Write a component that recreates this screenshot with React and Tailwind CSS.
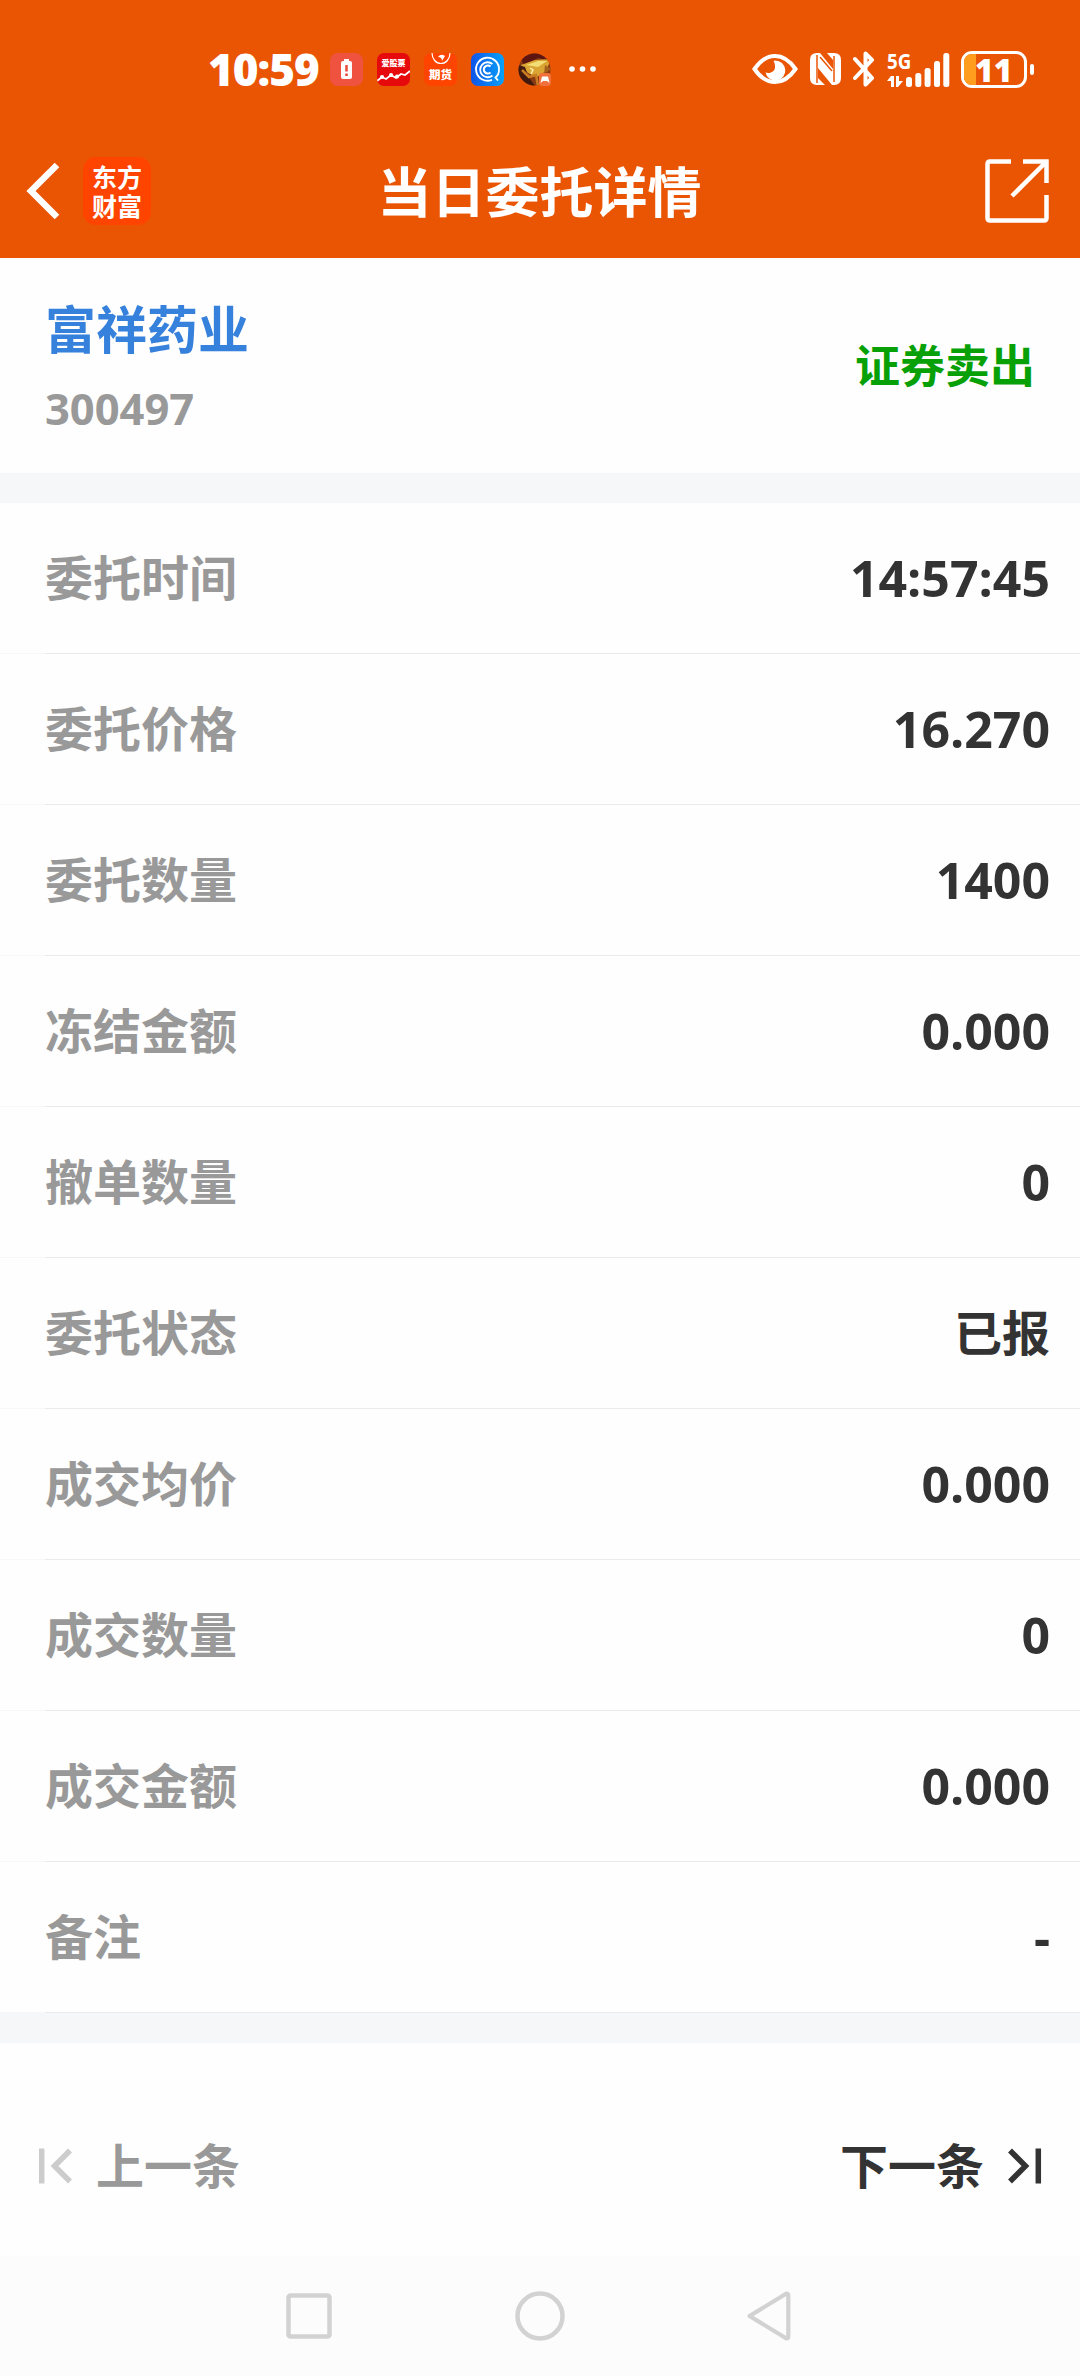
import React from 'react'

const rows = [
  { label: '委托时间', value: '14:57:45' },
  { label: '委托价格', value: '16.270' },
  { label: '委托数量', value: '1400' },
  { label: '冻结金额', value: '0.000' },
  { label: '撤单数量', value: '0' },
  { label: '委托状态', value: '已报', isText: true },
  { label: '成交均价', value: '0.000' },
  { label: '成交数量', value: '0' },
  { label: '成交金额', value: '0.000' },
  { label: '备注', value: '-' }
]

const NotificationIcons = () => (
  <div className="ml-[10px] flex items-center gap-[14px]">
    <svg width="33" height="33" viewBox="0 0 33 33">
      <rect width="33" height="33" rx="8" fill="#ef5340" />
      <rect x="14" y="6" width="5" height="3" fill="#fff" />
      <rect x="11" y="8" width="11" height="18" rx="2" fill="#fff" />
      <path d="M16.500 12v6.500M16.500 20.500v2.500" stroke="#e8493a" strokeWidth="2.500" />
    </svg>
    <div className="flex h-[33px] w-[33px] flex-col items-center overflow-hidden rounded-[7px] bg-[#e60a0c] pt-[6px] text-white">
      <span className="text-[8px] leading-[8px] font-black whitespace-nowrap">爱股票</span>
      <svg className="mt-[2px]" width="33" height="14" viewBox="0 0 33 14">
        <path d="M0 12l5-4 4 2 5-4 5 3 5-4 4 1 5-4" fill="none" stroke="#fff" strokeWidth="1.800" />
        <path d="M5 8h.1M14 6h.1M20 7.500h.1" stroke="#fff" strokeWidth="4" strokeLinecap="round" />
      </svg>
    </div>
    <div className="flex h-[33px] w-[33px] flex-col items-center overflow-hidden rounded-[7px] bg-[#ff4400] text-white">
      <svg width="20" height="13" viewBox="0 0 20 13">
        <path d="M1 0c0 6 4 10.500 9 10.500S19 6 19 0" fill="none" stroke="#fff" strokeWidth="1.200" />
        <path d="M7 4q3-4 7-1l-3 5q0-4-4-4" fill="#fff" />
      </svg>
      <span className="text-[11.500px] leading-[17px] font-black whitespace-nowrap">期货</span>
    </div>
    <svg width="33" height="33" viewBox="0 0 33 33">
      <defs>
        <linearGradient id="blueTile">
          <stop offset="0" stopColor="#1054e8" />
          <stop offset="1" stopColor="#08a2fa" />
        </linearGradient>
      </defs>
      <rect width="33" height="33" rx="7" fill="url(#blueTile)" />
      <g fill="none" stroke="#fff" strokeWidth="1.800">
        <path d="M21 26.800A11.500 11.500 0 1 1 28 17q0 4.500-3.500 7.500l2.500 3" />
        <path d="M21.500 11a7.500 7.500 0 1 0 0 11.500" />
        <path d="M19.500 13.500a4 4 0 1 0 0 6" strokeWidth="2.200" />
      </g>
    </svg>
    <svg width="33" height="33" viewBox="0 0 33 33">
      <defs>
        <clipPath id="avatar"><circle cx="16.500" cy="16.500" r="16" /></clipPath>
      </defs>
      <g clipPath="url(#avatar)">
        <rect width="33" height="33" fill="#8a3a10" />
        <path d="M0 0h33v8L20 5 6 12z" fill="#5e1512" />
        <path d="M3 12l14-5 16-1-5 12-9 6-9-4z" fill="#dba534" />
        <path d="M8 12l12-4 9 0-9 6z" fill="#f3dd75" />
        <path d="M0 12l7 2 3 9 7 10H0z" fill="#42190f" />
        <path d="M4 17l7 7 7-2 2 11" fill="none" stroke="#c97c22" strokeWidth="2.500" />
        <path d="M12 15l3 2-2 4" fill="none" stroke="#fff3b0" strokeWidth="1.500" />
        <path d="M27 12l6 4-7 5z" fill="#a5621b" />
      </g>
      <rect x="21" y="20" width="12" height="13" rx="3" fill="#f2713a" />
      <path d="M22.500 30l1.500-6.500h6l1.500 6.500-2.500-2h-4z" fill="#fff" />
    </svg>
    <svg className="ml-[4px]" width="27" height="6" viewBox="0 0 27 6" fill="#fff">
      <circle cx="3" cy="3" r="2.800" />
      <circle cx="13.500" cy="3" r="2.800" />
      <circle cx="24" cy="3" r="2.800" />
    </svg>
  </div>
)

const SystemIcons = () => (
  <div className="flex items-center text-white">
    <svg width="46" height="32" viewBox="0 0 46 32">
      <path d="M2.500 16C8 8 15 3 23 3s15 5 20.500 13C38 24 31 29 23 29S8 24 2.500 16z" fill="none" stroke="#fff" strokeWidth="4" />
      <path d="M23 7.500a10 10 0 1 1-9.500 12c4 1.500 10-.5 9.500-6 0-2-.5-4-1.500-5.500z" fill="#fff" />
    </svg>
    <svg className="ml-3" width="31" height="32" viewBox="0 0 31 32">
      <path d="M7 0h3l13 16V7L17 0h7q7 0 7 7v18q0 7-7 7h-2L8 15v10l7 7H7q-7 0-7-7V7Q0 0 7 0z" fill="#fff" />
      <path d="M7 2v28M24 3v26M10 4l12 14" stroke="#ea5504" strokeWidth="1.500" fill="none" />
    </svg>
    <svg className="ml-3" width="22" height="36" viewBox="0 0 22 36">
      <path d="M2 8l17 19-6.500 6.500V2.500L19 9 2 27" fill="none" stroke="#fff" strokeWidth="4" strokeLinejoin="round" strokeLinecap="round" />
    </svg>
    <div className="ml-3 flex h-[35px] items-end">
      <div className="flex h-[35px] w-[19px] flex-col justify-between">
        <span className="origin-left scale-x-[0.850] text-[22px] leading-[17px] font-bold">5G</span>
        <svg width="16" height="11" viewBox="0 0 16 11">
          <path d="M0 5l4-5h3v11H4V5zM9 0h3v5h4l-5 6H9z" fill="#fff" />
        </svg>
      </div>
      <svg width="44" height="34" viewBox="0 0 44 34" fill="#fff">
        <rect x="0" y="24" width="6" height="10" rx="2.500" />
        <rect x="9.300" y="20" width="6" height="14" rx="2.500" />
        <rect x="18.600" y="15" width="6" height="19" rx="2.500" />
        <rect x="28" y="8" width="6" height="26" rx="2.500" />
        <rect x="37.300" y="0" width="6" height="34" rx="2.500" />
      </svg>
    </div>
    <div className="ml-[11px] flex h-[37px] w-[66px] rounded-[11px] border-[3px] border-white">
      <div className="h-full w-[12px] rounded-l-[8px] bg-[#ff9d1e]" />
      <span className="-ml-[1px] text-[32px] leading-[31px] font-extrabold">11</span>
    </div>
    <div className="ml-[3px] h-[11px] w-[4px] rounded-full bg-white" />
  </div>
)

const Header = () => (
  <header className="h-[258px] bg-[#ea5504] text-white">
    <div className="flex h-[138px] items-center justify-between pr-[46px] pl-[208px]">
      <div className="flex items-center">
        <span className="w-[112px] text-[44px] leading-none font-extrabold tracking-[-1px]">10:59</span>
        <NotificationIcons />
      </div>
      <SystemIcons />
    </div>
    <div className="flex h-[106px] items-center justify-between pr-[31px] pl-[26px]">
      <div className="flex w-[300px] items-center">
        <svg width="34" height="58" viewBox="0 0 34 58">
          <path d="M31 3L5 29l26 26" fill="none" stroke="#fff" strokeWidth="6.500" />
        </svg>
        <div className="ml-[23px] flex h-[68px] w-[68px] items-center justify-center rounded-[13px] bg-[#ff4400]">
          <span className="w-[50px] font-['Noto_Sans_CJK_SC',sans-serif] text-[25px] leading-[29px] font-bold">东方财富</span>
        </div>
      </div>
      <h1 className="pt-[2px] pl-[4px] text-[54px] leading-[60px] font-bold">当日委托详情</h1>
      <div className="flex w-[300px] justify-end">
        <svg width="64" height="64" viewBox="0 0 64 64" fill="none" stroke="#fff" strokeWidth="4.500">
          <path d="M26 2.500H5q-2.500 0-2.500 2.500v54q0 2.500 2.500 2.500h54q2.500 0 2.500-2.500V36" />
          <path d="M38 2.500h23.500V24M61 3L27 37" />
        </svg>
      </div>
    </div>
  </header>
)

const DetailRow = ({ label, value, isText }) => (
  <div>
    <div className="flex h-[150px] items-center justify-between pr-[30px] pl-[45px]">
      <span className="text-[48px] leading-none font-bold text-[#999999]">{label}</span>
      {isText ? (
        <span className="text-[48px] leading-none font-bold text-[#333333]">{value}</span>
      ) : (
        <span className="text-[50px] leading-none font-bold text-[#333333]">{value}</span>
      )}
    </div>
    <div className="flex h-px">
      <div className="w-[45px] bg-[#f7f7f7]" />
      <div className="flex-1 bg-[#ebebeb]" />
    </div>
  </div>
)

const App = () => {
  return (
    <div className="flex h-[2376px] w-[1080px] flex-col overflow-hidden bg-[#fefefe] font-['Open_Sans','Noto_Sans_CJK_SC',sans-serif] font-medium">
      <Header />

      {/* Stock */}
      <section className="flex h-[215px] items-center justify-between pr-[45px] pl-[45px]">
        <div className="pt-[6px]">
          <h2 className="text-[51px] leading-[60px] font-bold text-[#3681dc]">富祥药业</h2>
          <p className="mt-5 text-[43.500px] leading-[60px] font-bold text-[#999999]">300497</p>
        </div>
        <span className="text-[45px] leading-none font-bold text-[#07a007]">证券卖出</span>
      </section>
      <div className="h-[30px] bg-[#f6f7f9]" />

      {/* Order details */}
      <section>
        {rows.map((row) => (
          <DetailRow key={row.label} {...row} />
        ))}
      </section>
      <div className="h-[30px] bg-[#f6f7f9]" />

      {/* Pager */}
      <div className="flex flex-1 items-center justify-between pt-[32px] pr-[38px] pl-[38px] text-[48px] leading-none font-bold">
        <div className="flex items-center text-[#999999]">
          <svg width="35" height="36" viewBox="0 0 35 36" fill="none" stroke="#cccccc" strokeWidth="5.500">
            <path d="M3.700.5v35M32 2.500L16.500 18 32 33.500" />
          </svg>
          <span className="ml-[23px]">上一条</span>
        </div>
        <div className="flex items-center text-[#333333]">
          <span>下一条</span>
          <svg className="ml-[23px]" width="35" height="36" viewBox="0 0 35 36" fill="none" stroke="#333333" strokeWidth="5.500">
            <path d="M31.300.5v35M3 2.500L18.500 18 3 33.500" />
          </svg>
        </div>
      </div>

      {/* System navigation */}
      <nav className="flex h-[120px] items-center justify-between bg-[#fcfcfc] pr-[289px] pl-[286px]">
        <svg width="46" height="46" viewBox="0 0 46 46">
          <rect x="2.500" y="2.500" width="41" height="41" rx="2" fill="none" stroke="#d2d2d2" strokeWidth="4.500" />
        </svg>
        <svg width="50" height="50" viewBox="0 0 50 50">
          <circle cx="25" cy="25" r="22.500" fill="none" stroke="#d2d2d2" strokeWidth="4.500" />
        </svg>
        <svg width="44" height="50" viewBox="0 0 44 50">
          <path d="M39.500 2.500L2.500 25l37 22.500q1.800 0 1.800-2v-41q0-2-1.800-2z" fill="none" stroke="#d2d2d2" strokeWidth="4.200" strokeLinejoin="round" />
        </svg>
      </nav>
    </div>
  )
}

export default App
